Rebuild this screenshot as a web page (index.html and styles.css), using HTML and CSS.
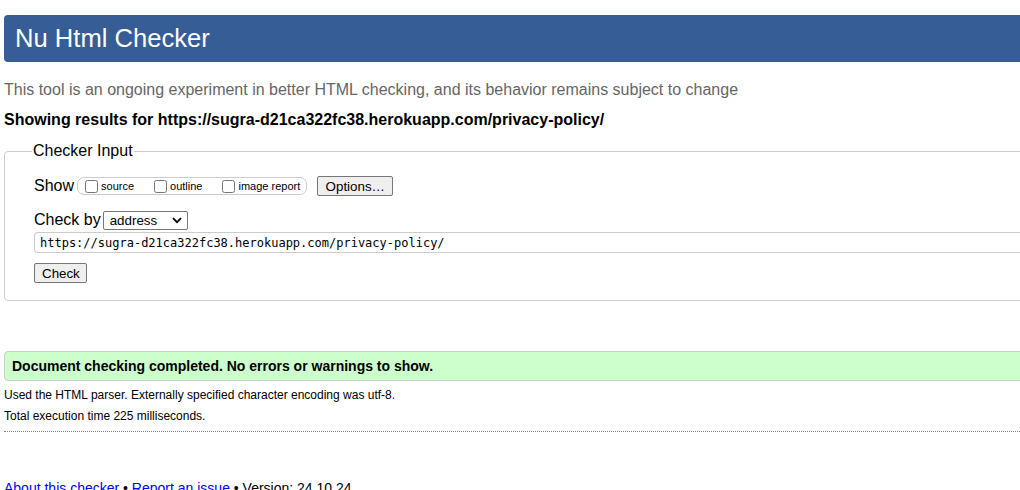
FILE: index.html
```html
<!DOCTYPE html>
<html lang="en">
<head>
<meta charset="utf-8">
<title>Showing results for https://sugra-d21ca322fc38.herokuapp.com/privacy-policy/ - Nu Html Checker</title>
<link rel="stylesheet" href="styles.css">
</head>
<body>
<h1 class="title">Nu Html Checker</h1>
<p class="intro">This tool is an ongoing experiment in better HTML checking, and its behavior remains subject to change</p>
<p class="showing">Showing results for https://sugra-d21ca322fc38.herokuapp.com/privacy-policy/</p>
<form class="checker">
  <fieldset class="input-set">
    <legend class="legend">Checker Input</legend>
    <div class="row show-row">
      <span class="row-label">Show</span>
      <span class="opts">
        <label class="opt"><input type="checkbox" class="cb"><span>source</span></label>
        <label class="opt"><input type="checkbox" class="cb"><span>outline</span></label>
        <label class="opt"><input type="checkbox" class="cb"><span>image report</span></label>
      </span>
      <button type="button" class="btn options-btn">Options…</button>
    </div>
    <div class="row by-row">
      <span class="row-label">Check by</span>
      <span class="select">address<svg class="chev" width="10" height="7" viewBox="0 0 10 7"><path d="M1 1.2 L5 5.2 L9 1.2" fill="none" stroke="#000" stroke-width="1.8"/></svg></span>
    </div>
    <div class="url">https://sugra-d21ca322fc38.herokuapp.com/privacy-policy/</div>
    <div class="row"><button type="button" class="btn check-btn">Check</button></div>
  </fieldset>
</form>
<div class="success">Document checking completed. No errors or warnings to show.</div>
<p class="details">Used the HTML parser. Externally specified character encoding was utf-8.</p>
<p class="details">Total execution time 225 milliseconds.</p>
<hr class="dots">
<p class="footer"><a href="#">About this checker</a> • <a href="#">Report an issue</a> • Version: 24.10.24</p>
</body>
</html>
```
FILE: styles.css
```css
html {
  overflow: hidden;
  background: #fff;
}
body {
  margin: 0;
  padding: 0 4px;
  width: 1100px;
  font-family: "Liberation Sans", Arial, sans-serif;
  font-size: 16px;
  color: #000;
}
.title {
  margin: 15px 0 0;
  height: 47px;
  display: flex;
  align-items: center;
  padding-left: 11px;
  background: #365d95;
  border-radius: 4px;
  color: #fff;
  font-size: 25.6px;
  font-weight: normal;
}
.intro {
  margin: 19px 0 0;
  color: #666;
}
.showing {
  margin: 12px 0 0;
  font-weight: bold;
}
.checker {
  margin: 13px 0 0;
}
.input-set {
  margin: 0;
  padding: 16px 0 17px 29px;
  border: 1px solid #ccc;
  border-radius: 4px;
  min-width: 0;
}
.legend {
  margin-left: -2px;
  padding: 0 1px;
}
.row {
  display: flex;
  align-items: center;
}
.show-row {
  height: 20px;
}
.row-label {
  margin-right: 3px;
}
.opts {
  display: inline-flex;
  align-items: center;
  height: 16px;
  border: 1px solid #ccc;
  border-radius: 7px;
  padding: 0 6px 0 3px;
  font-size: 11px;
}
.opt {
  display: inline-flex;
  align-items: center;
  margin-right: 16px;
}
.opt:last-child {
  margin-right: 0;
}
.cb {
  margin: 0 3px 0 4px;
  width: 13px;
  height: 13px;
}
.btn {
  font-family: "Liberation Sans", Arial, sans-serif;
  font-size: 13.33px;
  color: #000;
  background: #efefef;
  border: 1px solid #767676;
  border-radius: 2px;
  padding: 0 7px;
  height: 20px;
}
.options-btn {
  margin-left: 10px;
  width: 76px;
}
.by-row {
  margin-top: 14px;
  height: 20px;
}
.by-row .row-label {
  margin-right: 2px;
}
.select {
  display: inline-flex;
  align-items: center;
  justify-content: space-between;
  box-sizing: border-box;
  width: 85px;
  height: 19px;
  padding: 0 5px 0 6px;
  border: 1px solid #767676;
  border-radius: 2px;
  font-size: 13.33px;
}
.url {
  margin-top: 2px;
  height: 21px;
  box-sizing: border-box;
  border: 1px solid #ccc;
  border-right: none;
  border-radius: 4px 0 0 4px;
  padding-left: 5px;
  display: flex;
  align-items: center;
  font-family: "DejaVu Sans Mono", "Liberation Mono", monospace;
  font-size: 12px;
}
.check-btn {
  margin-top: 10px;
  width: 53px;
}
.success {
  margin-top: 50px;
  height: 30px;
  box-sizing: border-box;
  display: flex;
  align-items: center;
  padding-left: 7px;
  background: #ccffcc;
  border: 1px solid #ccc;
  border-radius: 4px;
  font-size: 14px;
  font-weight: bold;
}
.details {
  margin: 7px 0 0;
  font-size: 12px;
}
.details + .details {
  margin-top: 7px;
}
.dots {
  margin: 8px 0 0;
  border: none;
  border-top: 1px dotted #888;
  height: 0;
}
.footer {
  margin: 48px 0 0;
  font-size: 14px;
}
.footer a {
  color: #00f;
  text-decoration: none;
}
```
